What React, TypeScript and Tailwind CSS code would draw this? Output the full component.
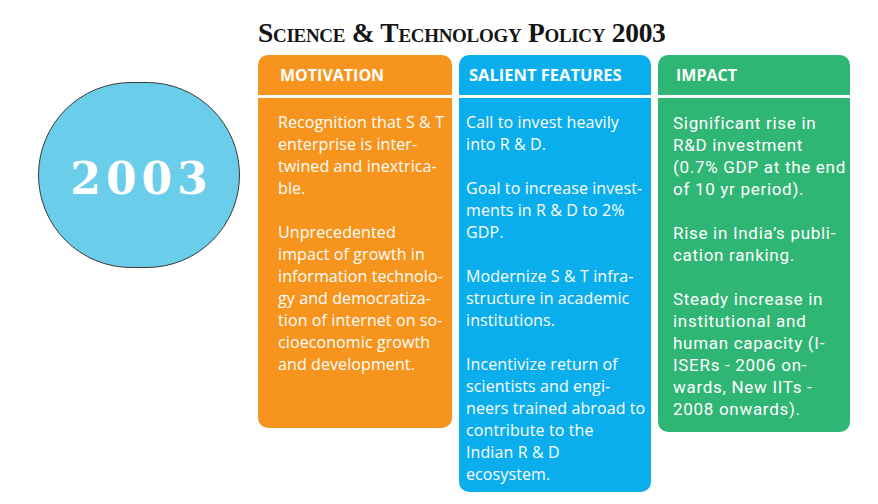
const motivation = [
  ["Recognition that S & T", "enterprise is inter-", "twined and inextrica-", "ble."],
  [
    "Unprecedented",
    "impact of growth in",
    "information technolo-",
    "gy and democratiza-",
    "tion of internet on so-",
    "cioeconomic growth",
    "and development.",
  ],
];

const features = [
  ["Call to invest heavily", "into R & D."],
  ["Goal to increase invest-", "ments in R & D to 2%", "GDP."],
  ["Modernize S & T infra-", "structure in academic", "institutions."],
  [
    "Incentivize return of",
    "scientists and engi-",
    "neers trained abroad to",
    "contribute to the",
    "Indian R & D",
    "ecosystem.",
  ],
];

const impact = [
  ["Significant rise in", "R&D investment", "(0.7% GDP at the end", "of 10 yr period)."],
  ["Rise in India’s publi-", "cation ranking."],
  [
    "Steady increase in",
    "institutional and",
    "human capacity (I-",
    "ISERs - 2006 on-",
    "wards, New IITs -",
    "2008 onwards).",
  ],
];

function Paragraphs({ items }: { items: string[][] }) {
  return (
    <div className="flex flex-col gap-[22px]">
      {items.map((lines, i) => (
        <p key={i}>
          {lines.map((l) => (
            <span key={l} className="block whitespace-nowrap">
              {l}
            </span>
          ))}
        </p>
      ))}
    </div>
  );
}

export default function App() {
  return (
    <div className="w-[878px] h-[504px] bg-white flex overflow-hidden">
      {/* Year badge */}
      <div className="pl-[38px] pt-[82px] w-[258px] shrink-0">
        <div className="w-[202px] h-[186px] rounded-full bg-[#6acdea] border-[1.5px] border-[#3a3a3a] flex items-center justify-center">
          <span
            className="text-white text-[44px] leading-none font-bold tracking-[5px] pl-[5px] pt-[8px]"
            style={{ fontFamily: '"DejaVu Serif", serif' }}
          >
            2003
          </span>
        </div>
      </div>

      <div className="flex flex-col">
        <h1
          className="h-[55px] pt-[19px] text-[27.5px] leading-none font-bold text-[#151515] [font-variant:small-caps] tracking-[-0.3px] whitespace-nowrap"
          style={{ fontFamily: '"Liberation Serif", serif' }}
        >
          Science &amp; Technology Policy 2003
        </h1>

        <div className="flex items-start gap-[7px] text-white">
          {/* Motivation */}
          <div className="w-[194px]">
            <div
              className="h-[40px] rounded-t-[10px] bg-[#f7941d] pl-[22px] flex items-center text-[16px] font-bold"
              style={{ fontFamily: '"Open Sans", sans-serif' }}
            >
              MOTIVATION
            </div>
            <div
              className="mt-[3px] h-[330px] rounded-b-[10px] bg-[#f7941d] pl-[20px] pt-[13px] text-[16px] leading-[22px] tracking-[0.1px]"
              style={{ fontFamily: '"Open Sans", sans-serif' }}
            >
              <Paragraphs items={motivation} />
            </div>
          </div>

          {/* Salient features */}
          <div className="w-[192px]">
            <div
              className="h-[40px] rounded-t-[10px] bg-[#0aaeed] pl-[10px] flex items-center text-[16.5px] font-bold"
              style={{ fontFamily: '"Open Sans", sans-serif' }}
            >
              SALIENT FEATURES
            </div>
            <div
              className="mt-[3px] h-[394px] rounded-b-[10px] bg-[#0aaeed] pl-[7px] pt-[13px] text-[16px] leading-[22px] tracking-[0.1px]"
              style={{ fontFamily: '"Open Sans", sans-serif' }}
            >
              <Paragraphs items={features} />
            </div>
          </div>

          {/* Impact */}
          <div className="w-[192px]">
            <div
              className="h-[40px] rounded-t-[10px] bg-[#2fb574] pl-[18px] flex items-center text-[16px] font-bold"
              style={{ fontFamily: '"Open Sans", sans-serif' }}
            >
              IMPACT
            </div>
            <div
              className="mt-[3px] h-[334px] rounded-b-[10px] bg-[#2fb574] pl-[15px] pt-[14px] text-[17px] leading-[22px] font-normal tracking-[0.7px]"
              style={{ fontFamily: "Roboto, sans-serif" }}
            >
              <Paragraphs items={impact} />
            </div>
          </div>
        </div>
      </div>
    </div>
  );
}
